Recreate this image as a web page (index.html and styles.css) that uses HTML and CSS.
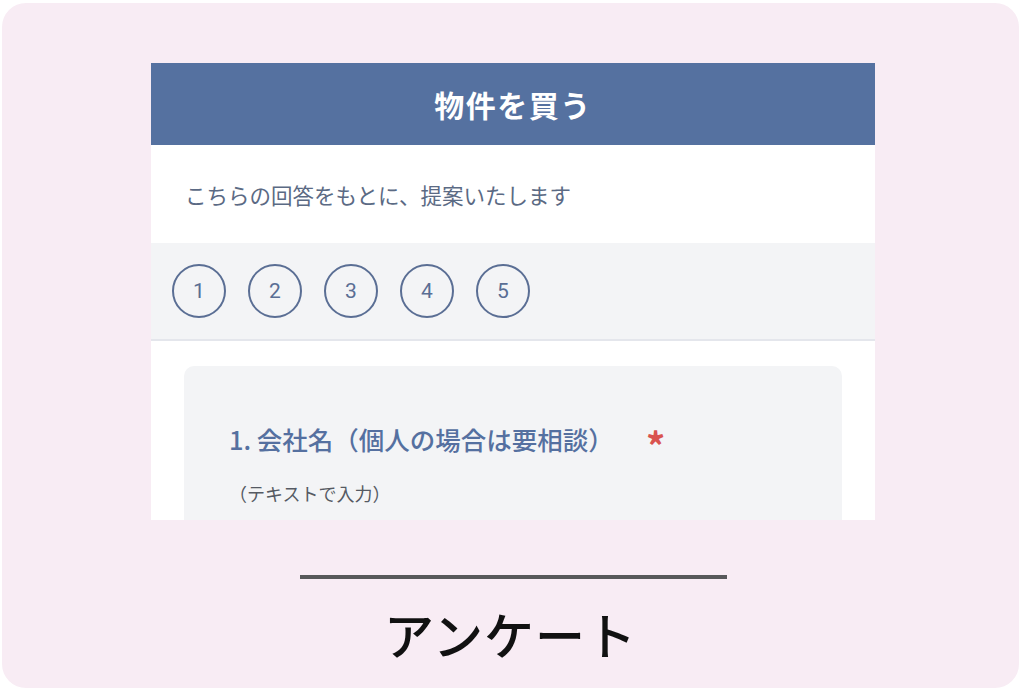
FILE: index.html
```html
<!DOCTYPE html>
<html lang="ja">
<head>
<meta charset="utf-8">
<link rel="stylesheet" href="styles.css">
</head>
<body>
<div class="frame">
  <div class="panel">
    <div class="header">物件を買う</div>
    <div class="intro">こちらの回答をもとに、提案いたします</div>
    <div class="steps">
      <span class="step">1</span>
      <span class="step">2</span>
      <span class="step">3</span>
      <span class="step">4</span>
      <span class="step">5</span>
    </div>
    <div class="body">
      <div class="card">
        <div class="question">1. 会社名（個人の場合は要相談）<span class="req">*</span></div>
        <div class="hint">（テキストで入力）</div>
      </div>
    </div>
  </div>
  <div class="rule"></div>
  <div class="caption">アンケート</div>
</div>
</body>
</html>
```
FILE: styles.css
```css
html, body {
  margin: 0;
  padding: 0;
  background: #ffffff;
}
body {
  padding: 3px 5px 3px 2px;
  font-family: "Noto Sans CJK JP", "Noto Sans", sans-serif;
}
.frame {
  height: 685px;
  background: #f8ecf4;
  border-radius: 24px;
  padding-top: 60px;
  box-sizing: border-box;
  overflow: hidden;
}
.panel {
  margin-left: 149px;
  width: 724px;
  height: 457px;
  overflow: hidden;
  background: #ffffff;
}
.header {
  height: 82px;
  background: #5571a0;
  color: #ffffff;
  font-size: 30px;
  font-weight: 700;
  display: flex;
  align-items: center;
  justify-content: center;
  letter-spacing: 1.5px;
}
.intro {
  height: 98px;
  display: flex;
  align-items: center;
  padding-left: 34px;
  font-size: 21.5px;
  color: #5b6a84;
}
.steps {
  height: 96px;
  background: #f3f4f6;
  border-bottom: 2px solid #e4e6ec;
  display: flex;
  align-items: center;
  gap: 22px;
  padding-left: 21px;
}
.step {
  width: 50px;
  height: 50px;
  border: 2px solid #5a6e94;
  border-radius: 50%;
  display: flex;
  align-items: center;
  justify-content: center;
  font-family: Roboto, "Noto Sans", sans-serif;
  font-size: 21px;
  color: #5a6e94;
}
.body {
  padding: 25px 33px;
}
.card {
  background: #f3f4f6;
  border-radius: 10px;
  height: 300px;
  padding: 54px 45px 0;
}
.question {
  font-size: 25.5px;
  font-weight: 500;
  color: #5570a0;
  line-height: 38px;
  height: 38px;
}
.req {
  color: #d9534f;
  margin-left: 32px;
  font-size: 38px;
  line-height: 0;
  font-weight: 700;
  vertical-align: -11px;
}
.hint {
  margin-top: 22px;
  font-size: 18px;
  color: #555a63;
  line-height: 26px;
}
.rule {
  margin: 55px 0 0 298px;
  width: 427px;
  height: 4px;
  background: #58585a;
}
.caption {
  margin-top: 24px;
  text-align: center;
  font-size: 50px;
  line-height: 60px;
  font-weight: 500;
  color: #111111;
  letter-spacing: 1px;
}
```
